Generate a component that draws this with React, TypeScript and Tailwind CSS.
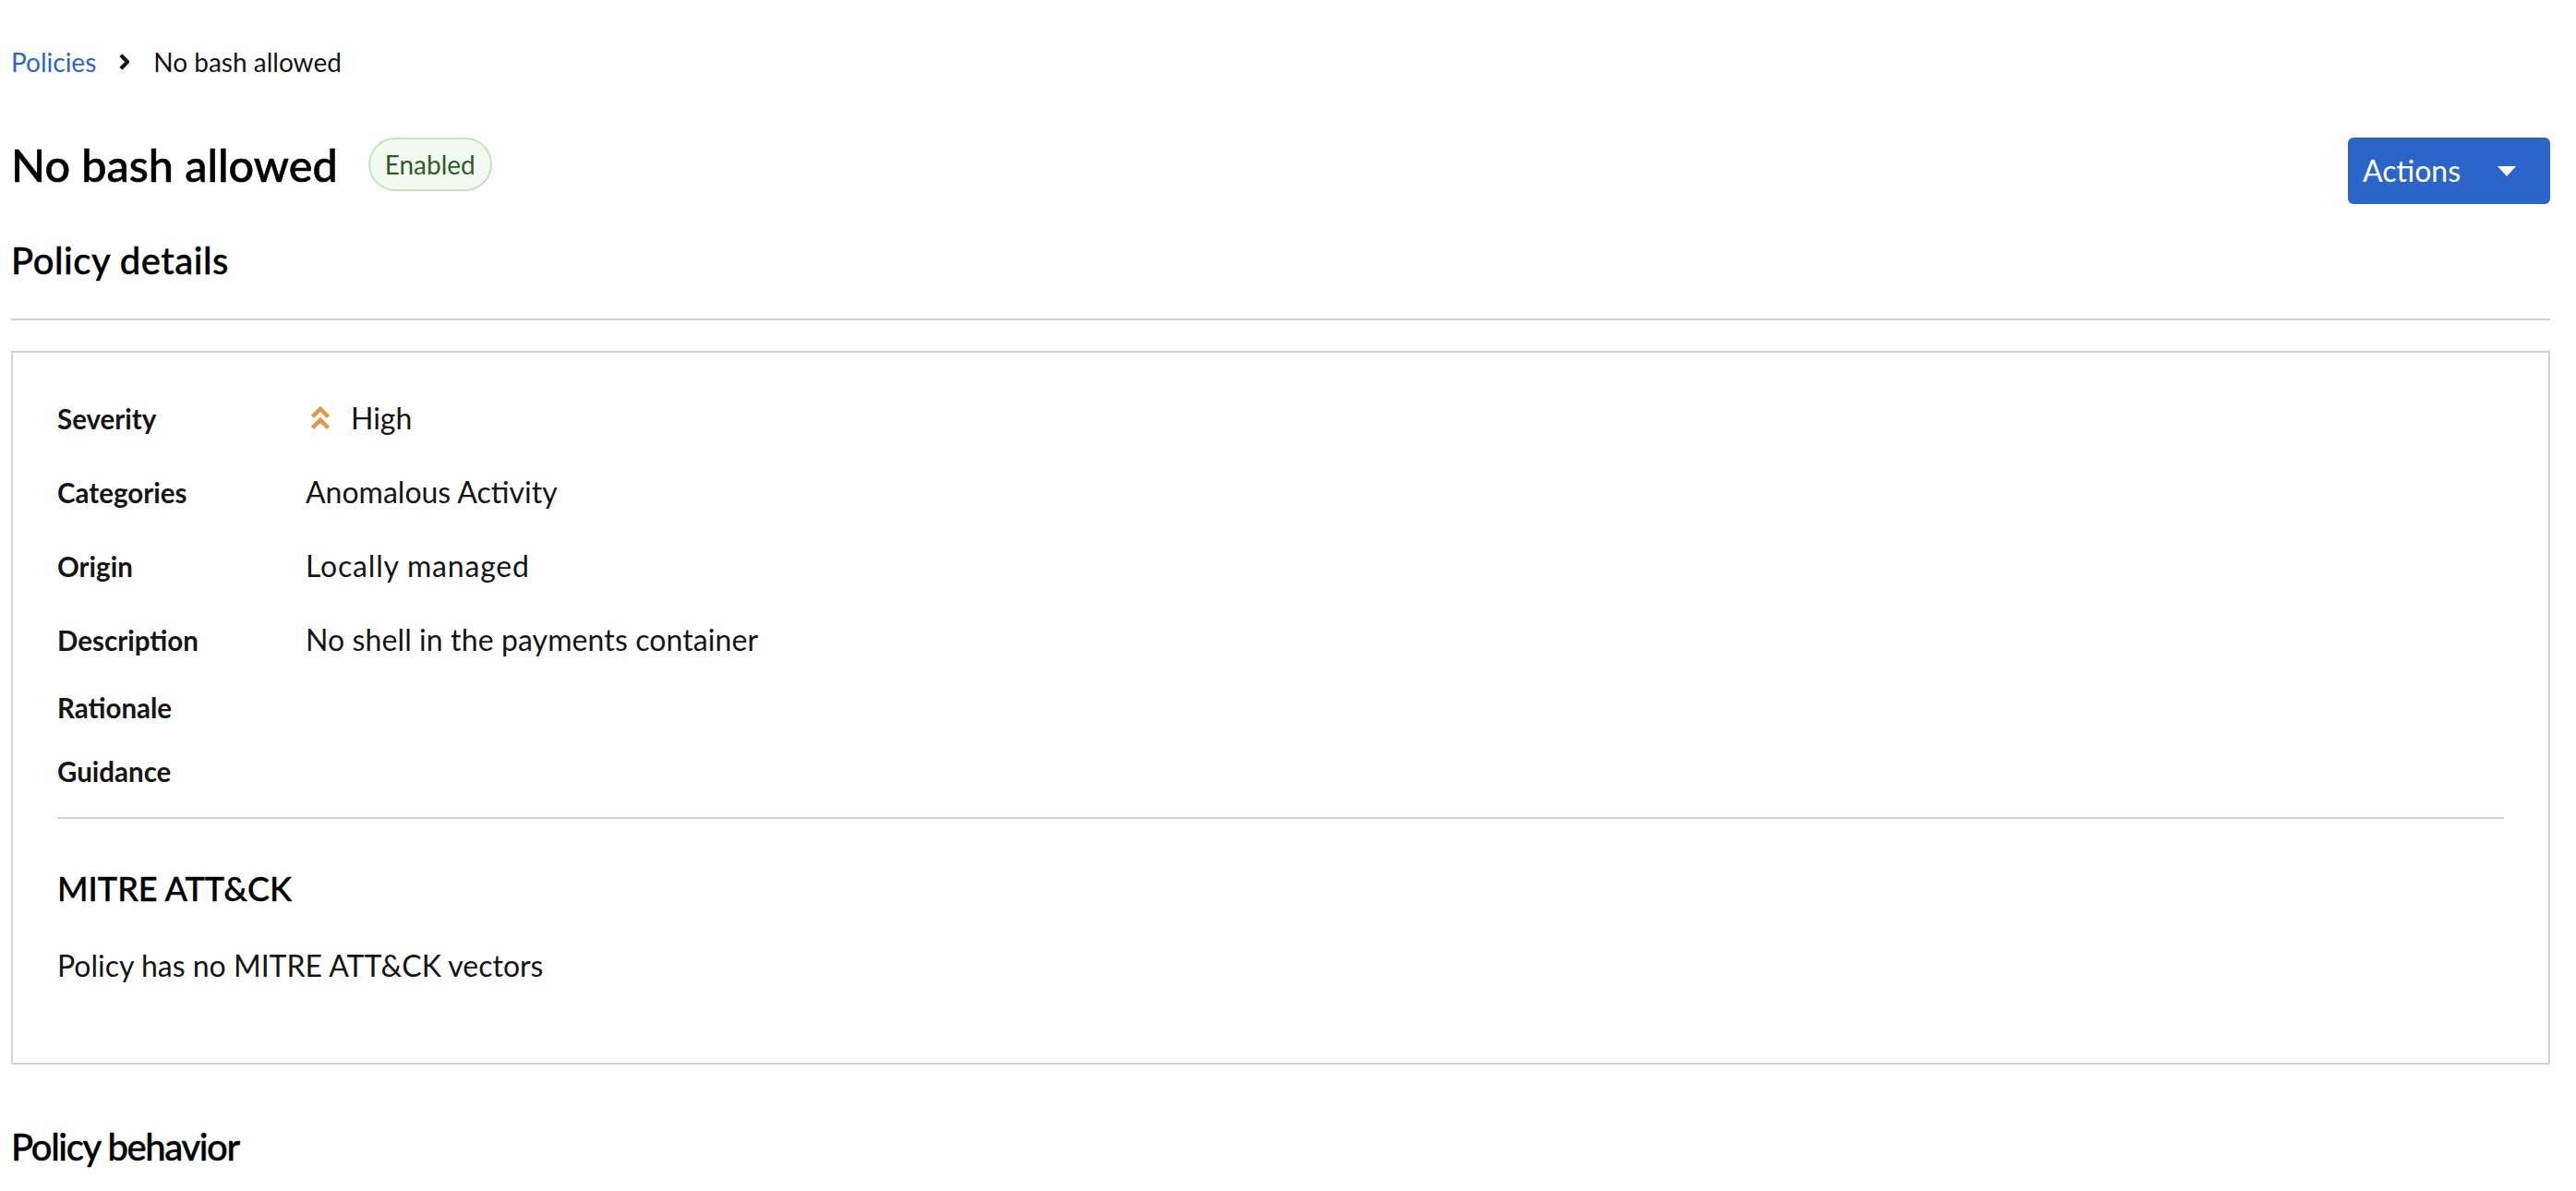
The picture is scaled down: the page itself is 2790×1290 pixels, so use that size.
const rows = [
  { label: "Categories", value: "Anomalous Activity", rowClass: "h-20", valueClass: "" },
  { label: "Origin", value: "Locally managed", rowClass: "h-20", valueClass: "tracking-[0.8px]" },
  { label: "Description", value: "No shell in the payments container", rowClass: "h-[73px]", valueClass: "tracking-[0.1px]" },
  { label: "Rationale", value: "", rowClass: "h-[69px]", valueClass: "" },
  { label: "Guidance", value: "", rowClass: "h-[74px]", valueClass: "" },
];

const Label = ({ text }: { text: string }) => (
  <div className="w-[269px] shrink-0 pt-1 text-[29.5px] font-bold leading-[42px] text-[#151515]">{text}</div>
);

const App = () => {
  return (
    <div className="h-[1290px] overflow-hidden bg-white pl-3 pr-7 font-['Lato',sans-serif] text-[#151515]">
      <nav className="flex h-[134px] items-center text-[28px]">
        <a className="text-[#2b65c9]">Policies</a>
        <svg viewBox="0 0 12 20" className="ml-[25px] mr-[26px] h-[18px] w-[11px]" fill="none" stroke="#151515" strokeWidth="4.5">
          <path d="M2 2l8 8-8 8" />
        </svg>
        <span>No bash allowed</span>
      </nav>

      <div className="flex h-[87px] items-start justify-between pt-[15px]">
        <div className="flex items-center">
          <h1 className="text-[48.5px] font-medium leading-[58px] text-black [-webkit-text-stroke:0.6px_black]">
            No bash allowed
          </h1>
          <span className="ml-[33px] flex h-[58px] items-center rounded-full border-2 border-[#c3e6bd] bg-[#f3faf2] px-[16px] text-[28px] text-[#2f5a28]">
            Enabled
          </span>
        </div>
        <button className="flex h-[72px] w-[219px] items-center rounded-md bg-[#2b65c9] pl-4 text-[32px] text-white">
          Actions
          <svg viewBox="0 0 20 12" className="ml-10 h-3 w-5" fill="white">
            <path d="M0 1h20L10 12z" />
          </svg>
        </button>
      </div>

      <div className="h-[126px] border-b-2 border-[#d2d2d2] pt-9">
        <h2 className="text-[40px] font-medium leading-[50px] tracking-[0.5px] text-black [-webkit-text-stroke:0.4px_black]">
          Policy details
        </h2>
      </div>

      <section className="mt-[33px] h-[773px] border-2 border-[#d2d2d2] px-12 pt-[47px]">
        <div className="flex h-20 items-start">
          <Label text="Severity" />
          <div className="flex items-center text-[32px]">
            <svg viewBox="0 0 20 26" className="ml-1.5 mr-[23px] h-[26px] w-5" fill="none" stroke="#e8954a" strokeWidth="4.5">
              <path d="M1.5 11.5L10 3l8.5 8.5M1.5 23.5L10 15l8.5 8.5" />
            </svg>
            High
          </div>
        </div>
        {rows.map((row) => (
          <div key={row.label} className={`flex items-start ${row.rowClass}`}>
            <Label text={row.label} />
            <div className={`text-[32px] ${row.valueClass}`}>{row.value}</div>
          </div>
        ))}
        <div className="border-t-2 border-[#d2d2d2] pt-[52px]">
          <h3 className="text-[36px] font-medium leading-[46px] text-black [-webkit-text-stroke:0.4px_black]">MITRE ATT&amp;CK</h3>
          <p className="mt-[41px] text-[32px] leading-10">Policy has no MITRE ATT&amp;CK vectors</p>
        </div>
      </section>

      <h2 className="mt-[64px] text-[40px] font-medium leading-[50px] tracking-[-1.4px] text-black [-webkit-text-stroke:0.4px_black]">
        Policy behavior
      </h2>
    </div>
  );
};

export default App;
